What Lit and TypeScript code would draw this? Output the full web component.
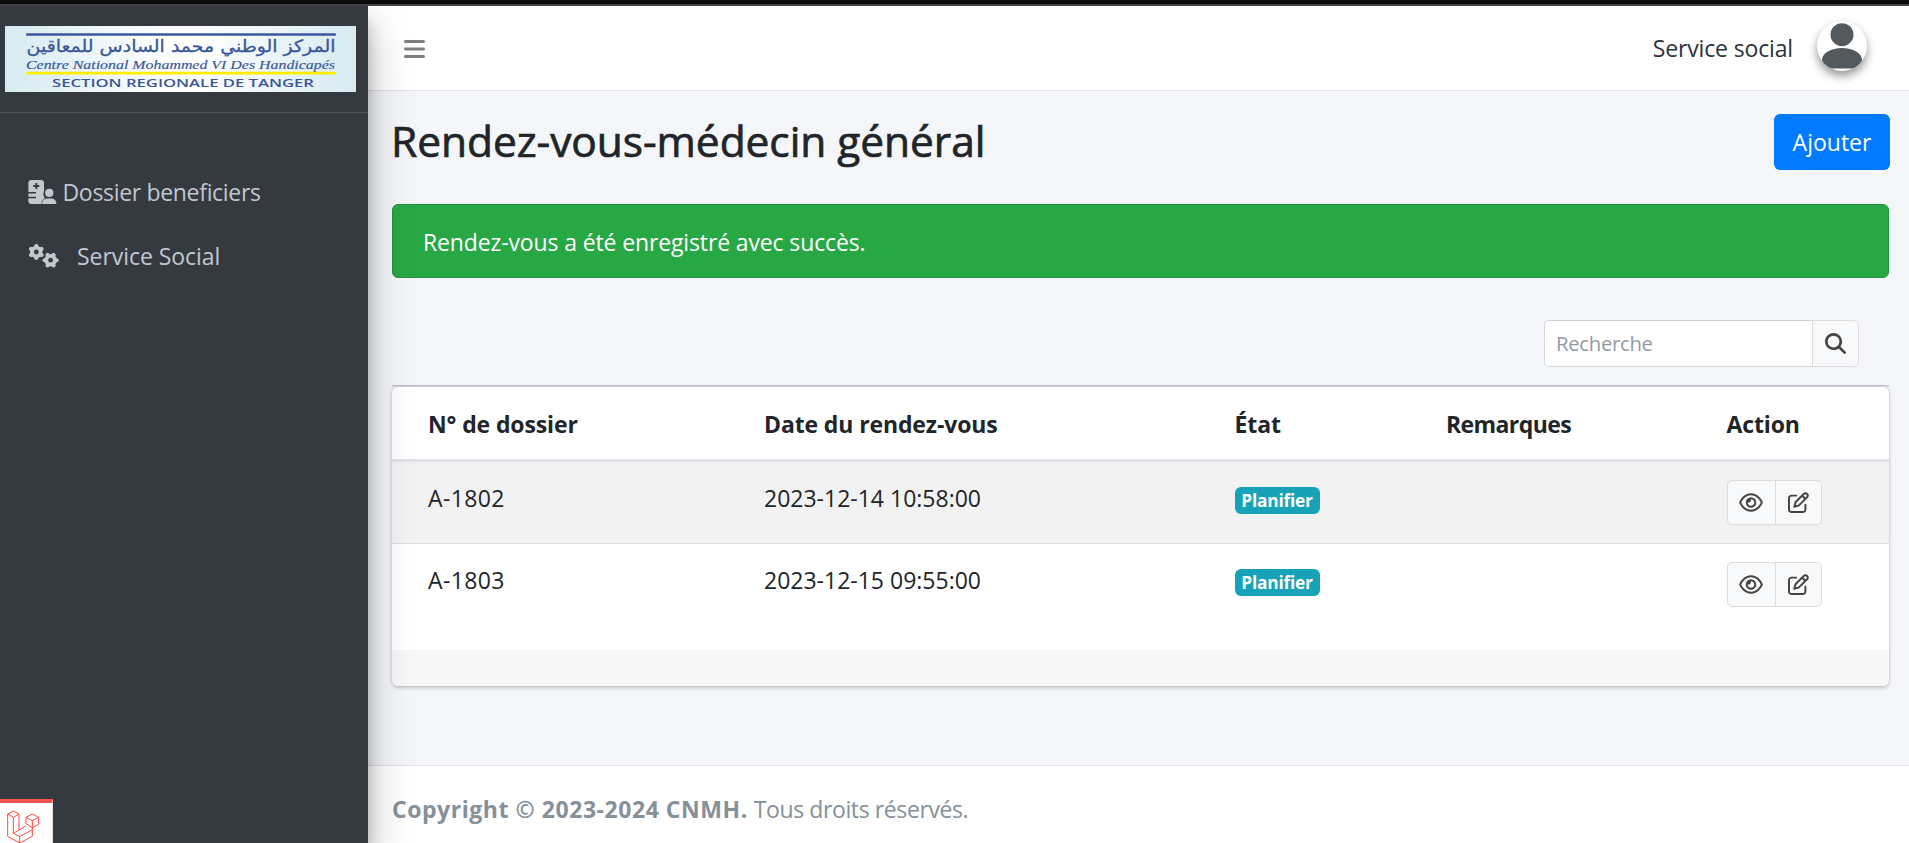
import { LitElement, html, css, svg } from "lit";
import { customElement } from "lit/decorators.js";

const EYE = "M288 80c-65.2 0-118.8 29.6-159.9 67.7C89.6 183.5 63 226 49.4 256c13.6 30 40.2 72.5 78.6 108.3C169.2 402.4 222.8 432 288 432s118.8-29.6 159.9-67.7C486.4 328.5 513 286 526.6 256c-13.6-30-40.2-72.5-78.6-108.3C406.8 109.6 353.2 80 288 80zM95.4 112.6C142.5 68.8 207.2 32 288 32s145.5 36.8 192.6 80.6c46.8 43.5 78.1 95.4 93 131.1c3.3 7.9 3.3 16.7 0 24.6c-14.9 35.7-46.2 87.7-93 131.1C433.5 443.2 368.8 480 288 480s-145.5-36.8-192.6-80.6C48.6 356 17.3 304 2.5 268.3c-3.3-7.9-3.3-16.7 0-24.6C17.3 208 48.6 156 95.4 112.6zM288 336c44.2 0 80-35.8 80-80s-35.8-80-80-80c-.7 0-1.3 0-2 0c1.3 5.1 2 10.5 2 16c0 35.3-28.7 64-64 64c-5.5 0-10.9-.7-16-2c0 .7 0 1.3 0 2c0 44.2 35.8 80 80 80zm0-208a128 128 0 1 1 0 256 128 128 0 1 1 0-256z";
const PEN = "M441 58.9L453.1 71c9.4 9.4 9.4 24.6 0 33.9L424 134.1 377.9 88 407 58.9c9.4-9.4 24.6-9.4 33.9 0zM209.8 256.2L344 121.9 390.1 168 255.8 302.2c-2.9 2.9-6.5 5-10.4 6.1l-58.5 16.7 16.7-58.5c1.1-3.9 3.2-7.5 6.1-10.4zM373.1 25L175.8 222.2c-8.7 8.7-15 19.4-18.3 31.1l-28.6 100c-2.4 8.4-.1 17.4 6.1 23.6s15.2 8.5 23.6 6.1l100-28.6c11.8-3.4 22.5-9.7 31.1-18.3L487 138.9c28.1-28.1 28.1-73.7 0-101.8L474.9 25C446.8-3.1 401.2-3.1 373.1 25zM88 64C39.4 64 0 103.4 0 152V424c0 48.6 39.4 88 88 88H360c48.6 0 88-39.4 88-88V312c0-13.3-10.7-24-24-24s-24 10.7-24 24V424c0 22.1-17.9 40-40 40H88c-22.1 0-40-17.9-40-40V152c0-22.1 17.9-40 40-40H200c13.3 0 24-10.7 24-24s-10.7-24-24-24H88z";
const SEARCH = "M416 208c0 45.9-14.9 88.3-40 122.7L502.6 457.4c12.5 12.5 12.5 32.8 0 45.3s-32.8 12.5-45.3 0L330.7 376c-34.4 25.2-76.8 40-122.7 40C93.1 416 0 322.9 0 208S93.1 0 208 0S416 93.1 416 208zM208 352a144 144 0 1 0 0-288 144 144 0 1 0 0 288z";
const BARS = "M0 96C0 78.3 14.3 64 32 64H416c17.7 0 32 14.3 32 32s-14.3 32-32 32H32C14.3 128 0 113.7 0 96zM0 256c0-17.7 14.3-32 32-32H416c17.7 0 32 14.3 32 32s-14.3 32-32 32H32c-17.7 0-32-14.3-32-32zM448 416c0 17.7-14.3 32-32 32H32c-17.7 0-32-14.3-32-32s14.3-32 32-32H416c17.7 0 32 14.3 32 32z";

const icon = (d: string, vw: number, w: number, h: number) =>
  html`<svg width=${w} height=${h} viewBox="0 0 ${vw} 512" fill="currentColor"><path d=${d}></path></svg>`;

// A six-toothed cog around (cx, cy), first tooth at `turn` degrees.
const cog = (cx: number, cy: number, turn: number) => svg`
  <g transform="translate(${cx} ${cy}) rotate(${turn})" stroke="#c2c7d0">
    ${[0, 60, 120].map((a) => svg`<path d="M-6.1 0H6.1" stroke-width="4" stroke-linecap="round" transform="rotate(${a})"></path>`)}
    <circle r="4.3" fill="none" stroke-width="3.8"></circle>
    <circle r="2.4" fill="#343a40" stroke="none"></circle>
  </g>`;

const rows = [
  { file: "A-1802", date: "2023-12-14 10:58:00", state: "Planifier" },
  { file: "A-1803", date: "2023-12-15 09:55:00", state: "Planifier" },
];

@customElement("app-sidebar")
class AppSidebar extends LitElement {
  static styles = css`
    :host { display: block; width: 368px; flex: none; background: #343a40; color: #c2c7d0; position: relative; z-index: 2;
      box-shadow: 0 21px 42px rgba(0,0,0,.25), 0 15px 15px rgba(0,0,0,.22); }
    svg { display: block; flex: none; }
    .brand { box-sizing: border-box; height: 107px; padding: 20px 0 0 5px; border-bottom: 1px solid #4b545c; }
    nav { padding: 49px 0 0 28px; display: flex; flex-direction: column; gap: 4px; }
    .item { display: flex; align-items: center; height: 60px; line-height: 36px; font-size: 23px; white-space: nowrap; }
    .first { letter-spacing: -.32px; gap: 5.5px; }
    .second { gap: 18px; letter-spacing: -.05px; }
    .debug { position: absolute; left: 0; bottom: 0; width: 52px; height: 40px; background: #fff; border-top: 4px solid #ff5153; border-right: 1px solid #dcdcdc; overflow: hidden; }
  `;
  render() {
    return html`
      <div class="brand">
        <svg width="351" height="66" viewBox="0 0 351 66">
          <defs><linearGradient id="g"><stop offset="0" stop-color="#d6ebf1"></stop><stop offset=".15" stop-color="#e3f1f5"></stop><stop offset=".45" stop-color="#fff"></stop><stop offset=".56" stop-color="#fff"></stop><stop offset=".85" stop-color="#e3f1f5"></stop><stop offset="1" stop-color="#d6ebf1"></stop></linearGradient></defs>
          <rect width="351" height="66" fill="url(#g)"></rect>
          <rect x="21" y="7.3" width="310" height="2.4" rx="1" fill="#3d599c"></rect>
          <text x="176" y="26" text-anchor="middle" direction="rtl" textLength="309" lengthAdjust="spacingAndGlyphs" font-family="DejaVu Sans, sans-serif" font-size="17" fill="#3a5698" stroke="#3a5698" stroke-width=".3">المركز الوطني محمد السادس للمعاقين</text>
          <text x="21" y="42.5" textLength="309" lengthAdjust="spacingAndGlyphs" font-family="Liberation Serif, serif" font-style="italic" font-size="12" fill="#3a5698" stroke="#3a5698" stroke-width=".15">Centre National Mohammed VI Des Handicapés</text>
          <rect x="21" y="45.7" width="310" height="2.8" rx="1" fill="#ffee00"></rect>
          <text x="47" y="60.9" textLength="262" lengthAdjust="spacingAndGlyphs" font-family="Open Sans, sans-serif" font-size="10" font-weight="600" fill="#3a5698">SECTION REGIONALE DE TANGER</text>
        </svg>
      </div>
      <nav>
        <div class="item first">
          <svg width="29" height="24" viewBox="0 0 29 24" fill="#c2c7d0">
            <path d="M3 0H13a3 3 0 0 1 3 3V11.5a6 6 0 0 0 1 6.5Q13.5 20 13.5 24H3a3 3 0 0 1-2.6-3V3A3 3 0 0 1 3 0Z"></path>
            <path d="M8.3 3V9M5.3 6H11.3" stroke="#343a40" stroke-width="1.9"></path>
            <path d="M0 12.8H8M0 17.4H8" stroke="#343a40" stroke-width="1.5"></path>
            <circle cx="21.3" cy="12.9" r="4.1"></circle>
            <path d="M14.7 24a1 1 0 0 1-.7-1.2C14.5 20 16.5 18.4 19 18.4H23.5C26 18.4 28 20 28.4 22.8A1 1 0 0 1 27.6 24Z"></path>
          </svg><span>Dossier beneficiers</span>
        </div>
        <div class="item second">
          <svg width="31" height="24" viewBox="0 0 31 24">${cog(8.3, 8, 90)}${cog(22.6, 16.2, 0)}</svg><span>Service Social</span>
        </div>
      </nav>
      <div class="debug">
        <svg width="52" height="44" viewBox="0 0 52 44" fill="none" stroke="#ff4a40" stroke-linejoin="round">
          <g transform="translate(0 -8) scale(.3333)" stroke-width="3">
            <path d="M40 48L57 57L40 67L23 57Z M23 57V124L59 144L97 124V98 M40 67V115L78 93 M57 57V105 M40 115L59 125L97 104 M59 125V144 M97 57L116 67L97 77L78 67Z M78 67V86L97 98L116 88V67 M97 77V98"></path>
          </g>
        </svg>
      </div>`;
  }
}

@customElement("app-root")
class AppRoot extends LitElement {
  static styles = css`
    :host { display: flex; flex-direction: column; height: 843px; overflow: hidden; background: #f4f6f9; color: #212529;
      font: 400 23px/36px "Open Sans", "Noto Sans", sans-serif; }
    svg { display: block; flex: none; }
    .strip { height: 4px; flex: none; background: #0b0b0b; border-bottom: 2px solid #444; }
    .shell { display: flex; flex: 1; min-height: 0; }
    .main { flex: 1; min-width: 0; display: flex; flex-direction: column; }
    header { box-sizing: border-box; height: 85px; flex: none; background: #fff; border-bottom: 1px solid #dee2e6; display: flex; align-items: flex-start; justify-content: space-between; padding: 0 42px 0 36px; }
    .bars { color: #7f7f7f; margin-top: 31px; }
    .user { display: flex; gap: 24px; padding-top: 15px; }
    .user span { margin-top: 9px; color: #2c323c; letter-spacing: -.15px; }
    .avatar { width: 50px; height: 50px; border-radius: 50%; overflow: hidden; background: #fff; box-shadow: 0 5px 10px rgba(0,0,0,.42); }
    main { flex: 1; padding: 23px 20px 0 24px; }
    .title { display: flex; justify-content: space-between; align-items: flex-start; height: 90px; margin-right: -1px; }
    h1 { margin: 0 0 0 -1px; font-size: 42.5px; line-height: 53px; font-weight: 500; letter-spacing: -.07px; -webkit-text-stroke: .7px #212529; }
    .add { box-sizing: border-box; width: 116px; height: 56px; padding-top: 11px; border-radius: 6px; background: #007bff; color: #fff; line-height: 35px; text-align: center; }
    .alert { box-sizing: border-box; height: 74px; border: 1px solid #23923d; border-radius: 6px; background: #28a745; color: #fff; padding: 19px 30px; letter-spacing: -.13px; }
    .search { display: flex; justify-content: flex-end; margin: 42px 30px 18px 0; }
    .search div { box-sizing: border-box; height: 47px; }
    .field { width: 268px; border: 1px solid #ced4da; border-right: 0; border-radius: 5px 0 0 5px; background: #fff; color: #939ba2; font-size: 20.4px; letter-spacing: -.35px; padding: 4px 11px; }
    .go { width: 47px; border: 1px solid #ddd; border-radius: 0 5px 5px 0; background: #f8f9fa; color: #444; display: flex; align-items: center; justify-content: center; }
    .card { border-radius: 6px; background: #fff; box-shadow: 0 0 1.5px rgba(0,0,0,.2), 0 1.5px 4.5px rgba(0,0,0,.2); }
    .edge { height: 1px; background: #c3c8cd; border-bottom: 1px solid #dee2e6; }
    .row { display: grid; grid-template-columns: 336px 470.5px 211.5px 280.5px 1fr; padding-left: 36px; box-sizing: border-box; }
    .head { height: 75px; padding-top: 19px; font-weight: 700; letter-spacing: -.12px; border-bottom: 3px solid #dee2e6; }
    .line { height: 82px; padding-top: 18px; border-bottom: 1px solid #dee2e6; }
    .odd { background: #f2f2f2; }
    .last { height: 106px; border-bottom: 0; }
    .rem { letter-spacing: -.6px; }
    .file { letter-spacing: .35px; }
    .badge { display: block; width: 85px; height: 27px; margin-top: 7px; border-radius: 6px; background: #17a2b8; color: #fff; font-size: 17.3px; font-weight: 700; letter-spacing: -.2px; line-height: 28px; text-align: center; }
    .actions { box-sizing: border-box; width: 95px; height: 45px; border: 1px solid #ddd; border-radius: 5px; background: #f8f9fa; color: #444; display: flex; }
    .actions span { flex: 1; display: flex; align-items: center; justify-content: center; }
    .actions .view { border-right: 1px solid #ddd; flex: 0 0 47px; }
    .foot { height: 36px; background: #f7f7f7; border-radius: 0 0 6px 6px; }
    footer { box-sizing: border-box; height: 78px; flex: none; background: #fff; border-top: 1px solid #dee2e6; color: #869099; padding: 25px 0 0 24px; display: flex; gap: 6px; }
    footer b { letter-spacing: .55px; }
    footer span { letter-spacing: -.4px; }
  `;
  render() {
    return html`
      <div class="strip"></div>
      <div class="shell">
        <app-sidebar></app-sidebar>
        <div class="main">
          <header>
            <div class="bars">${icon(BARS, 448, 21, 24)}</div>
            <div class="user">
              <span>Service social</span>
              <div class="avatar">
                <svg width="50" height="50" viewBox="0 0 50 50" fill="#54595d">
                  <circle cx="25" cy="13.7" r="11.5"></circle>
                  <path d="M5 39C5 32 14 27 25 27S45 32 45 39C45 42 42 45 38 47.5H12C8 45 5 42 5 39Z"></path>
                </svg>
              </div>
            </div>
          </header>
          <main>
            <div class="title"><h1>Rendez-vous-médecin général</h1><div class="add">Ajouter</div></div>
            <div class="alert">Rendez-vous a été enregistré avec succès.</div>
            <div class="search"><div class="field">Recherche</div><div class="go">${icon(SEARCH, 512, 21, 21)}</div></div>
            <div class="edge"></div>
            <div class="card">
              <div class="row head"><span>N° de dossier</span><span>Date du rendez-vous</span><span>État</span><span class="rem">Remarques</span><span>Action</span></div>
              ${rows.map((r, i) => html`
                <div class="row line ${i % 2 ? "last" : "odd"}">
                  <span class="file">${r.file}</span><span>${r.date}</span>
                  <span><span class="badge">${r.state}</span></span><span></span>
                  <span class="actions"><span class="view">${icon(EYE, 576, 24, 21)}</span><span>${icon(PEN, 512, 21, 21)}</span></span>
                </div>`)}
              <div class="foot"></div>
            </div>
          </main>
          <footer><b>Copyright © 2023-2024 CNMH.</b><span>Tous droits réservés.</span></footer>
        </div>
      </div>`;
  }
}
